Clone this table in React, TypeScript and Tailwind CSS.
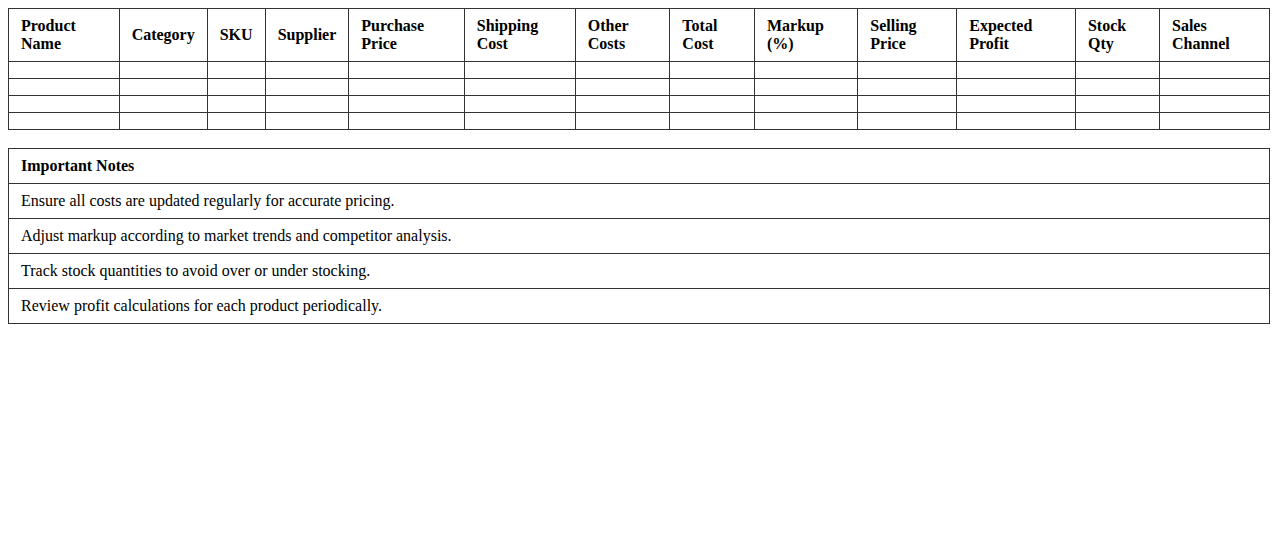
const headers = [
  "Product Name",
  "Category",
  "SKU",
  "Supplier",
  "Purchase Price",
  "Shipping Cost",
  "Other Costs",
  "Total Cost",
  "Markup (%)",
  "Selling Price",
  "Expected Profit",
  "Stock Qty",
  "Sales Channel",
];

const notes = [
  "Ensure all costs are updated regularly for accurate pricing.",
  "Adjust markup according to market trends and competitor analysis.",
  "Track stock quantities to avoid over or under stocking.",
  "Review profit calculations for each product periodically.",
];

export default function App() {
  return (
    <div className="min-h-screen bg-white p-2 font-['Liberation_Serif',serif] text-base text-black">
      <table className="w-full border-collapse">
        <thead>
          <tr>
            {headers.map((h) => (
              <th
                key={h}
                className="border border-[#333] px-3 py-2 text-left align-middle font-bold leading-[18px]"
              >
                {h}
              </th>
            ))}
          </tr>
        </thead>
        <tbody>
          {[0, 1, 2, 3].map((r) => (
            <tr key={r}>
              {headers.map((h) => (
                <td key={h} className="border border-[#333] px-3 py-2"></td>
              ))}
            </tr>
          ))}
        </tbody>
      </table>

      <table className="mt-[18px] w-full border-collapse">
        <thead>
          <tr>
            <th className="border border-[#333] px-3 py-2 text-left font-bold leading-[18px]">
              Important Notes
            </th>
          </tr>
        </thead>
        <tbody>
          {notes.map((n) => (
            <tr key={n}>
              <td className="border border-[#333] px-3 py-2 leading-[18px]">{n}</td>
            </tr>
          ))}
        </tbody>
      </table>
    </div>
  );
}
